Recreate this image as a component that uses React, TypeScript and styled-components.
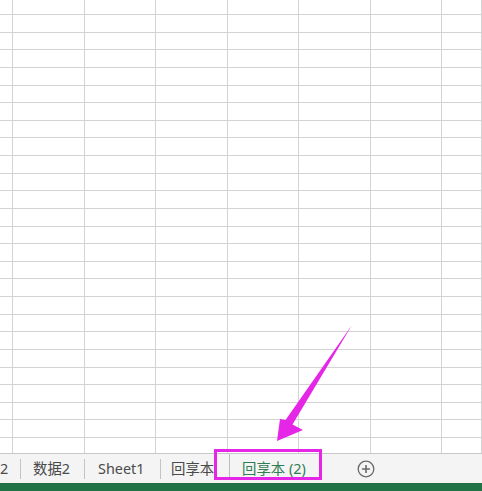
import React from "react";
import styled, { createGlobalStyle } from "styled-components";

const Global = createGlobalStyle`
  html, body { margin: 0; padding: 0; background: #ffffff; }
  body { width: 482px; height: 491px; overflow: hidden; font-family: "Noto Sans", "Noto Sans CJK SC", sans-serif; }
`;

const Page = styled.div`
  position: relative;
  width: 482px;
  height: 491px;
  display: flex;
  flex-direction: column;
  overflow: hidden;
  background: #fff;
`;

const Sheet = styled.div`
  height: 453px;
  overflow: hidden;
  display: grid;
  grid-template-columns: 13px repeat(6, 71.5px) 40px;
  grid-template-rows: 15px repeat(24, 17.64px) 20px;
`;

const Cell = styled.div`
  box-sizing: border-box;
  border-right: 1px solid #d3d3d3;
  border-bottom: 1px solid #d3d3d3;
`;

const TabBar = styled.div`
  box-sizing: border-box;
  height: 30px;
  border-top: 1px solid #c8c8c8;
  background: #f4f4f4;
  display: flex;
  align-items: center;
  font-size: 14.4px;
  color: #4a4a4a;
  overflow: hidden;
`;

const Tab = styled.div<{ $w: number; $pl: number }>`
  box-sizing: border-box;
  flex: 0 0 ${(p) => p.$w}px;
  padding-left: ${(p) => p.$pl}px;
  white-space: nowrap;
  line-height: 28px;
`;

const Sep = styled.div`
  flex: 0 0 1px;
  height: 20px;
  background: #c4c4c4;
`;

const Stub = styled.div`
  box-sizing: border-box;
  flex: 0 0 15px;
  align-self: flex-start;
  height: 26px;
  margin-top: -1px;
  border: 1px solid #bdbdbd;
  border-bottom: none;
  background: #f4f4f4;
`;

const ActiveTab = styled.div`
  box-sizing: border-box;
  flex: 0 0 92px;
  padding-left: 12px;
  white-space: nowrap;
  line-height: 28px;
  color: #2f7d52;
`;

const AddButton = styled.div`
  margin-left: 35px;
  width: 18px;
  height: 18px;
  display: flex;
  align-items: center;
  justify-content: center;
`;

const StatusBar = styled.div`
  height: 8px;
  background: #217346;
`;

const Highlight = styled.div`
  position: absolute;
  left: 214px;
  top: 449px;
  width: 108px;
  height: 31px;
  box-sizing: border-box;
  border: 3px solid #e626e6;
  pointer-events: none;
`;

const Overlay = styled.svg`
  position: absolute;
  left: 0;
  top: 0;
  pointer-events: none;
`;

export default function App() {
  const cells = [];
  for (let r = 0; r < 26; r++) {
    for (let c = 0; c < 8; c++) {
      cells.push(<Cell key={`${r}-${c}`} />);
    }
  }
  return (
    <>
      <Global />
      <Page>
        <Sheet>{cells}</Sheet>
        <TabBar>
          <Tab $w={20} $pl={0}>2</Tab>
          <Sep />
          <Tab $w={63} $pl={12}>数据2</Tab>
          <Sep />
          <Tab $w={75} $pl={13}>Sheet1</Tab>
          <Sep />
          <Tab $w={54} $pl={10}>回享本</Tab>
          <Stub />
          <ActiveTab>回享本 (2)</ActiveTab>
          <AddButton>
            <svg width="18" height="18" viewBox="0 0 18 18">
              <circle cx="9" cy="9" r="7.8" fill="none" stroke="#6a6a6a" strokeWidth="1.3" />
              <path d="M9 5v8M5 9h8" stroke="#6a6a6a" strokeWidth="1.6" />
            </svg>
          </AddButton>
        </TabBar>
        <StatusBar />
        <Highlight />
        <Overlay width="482" height="491" viewBox="0 0 482 491">
          <polygon
            points="352,325 292.5,424.5 303,430 277,441 280,419 285.5,420"
            fill="#e626e6"
          />
        </Overlay>
      </Page>
    </>
  );
}
